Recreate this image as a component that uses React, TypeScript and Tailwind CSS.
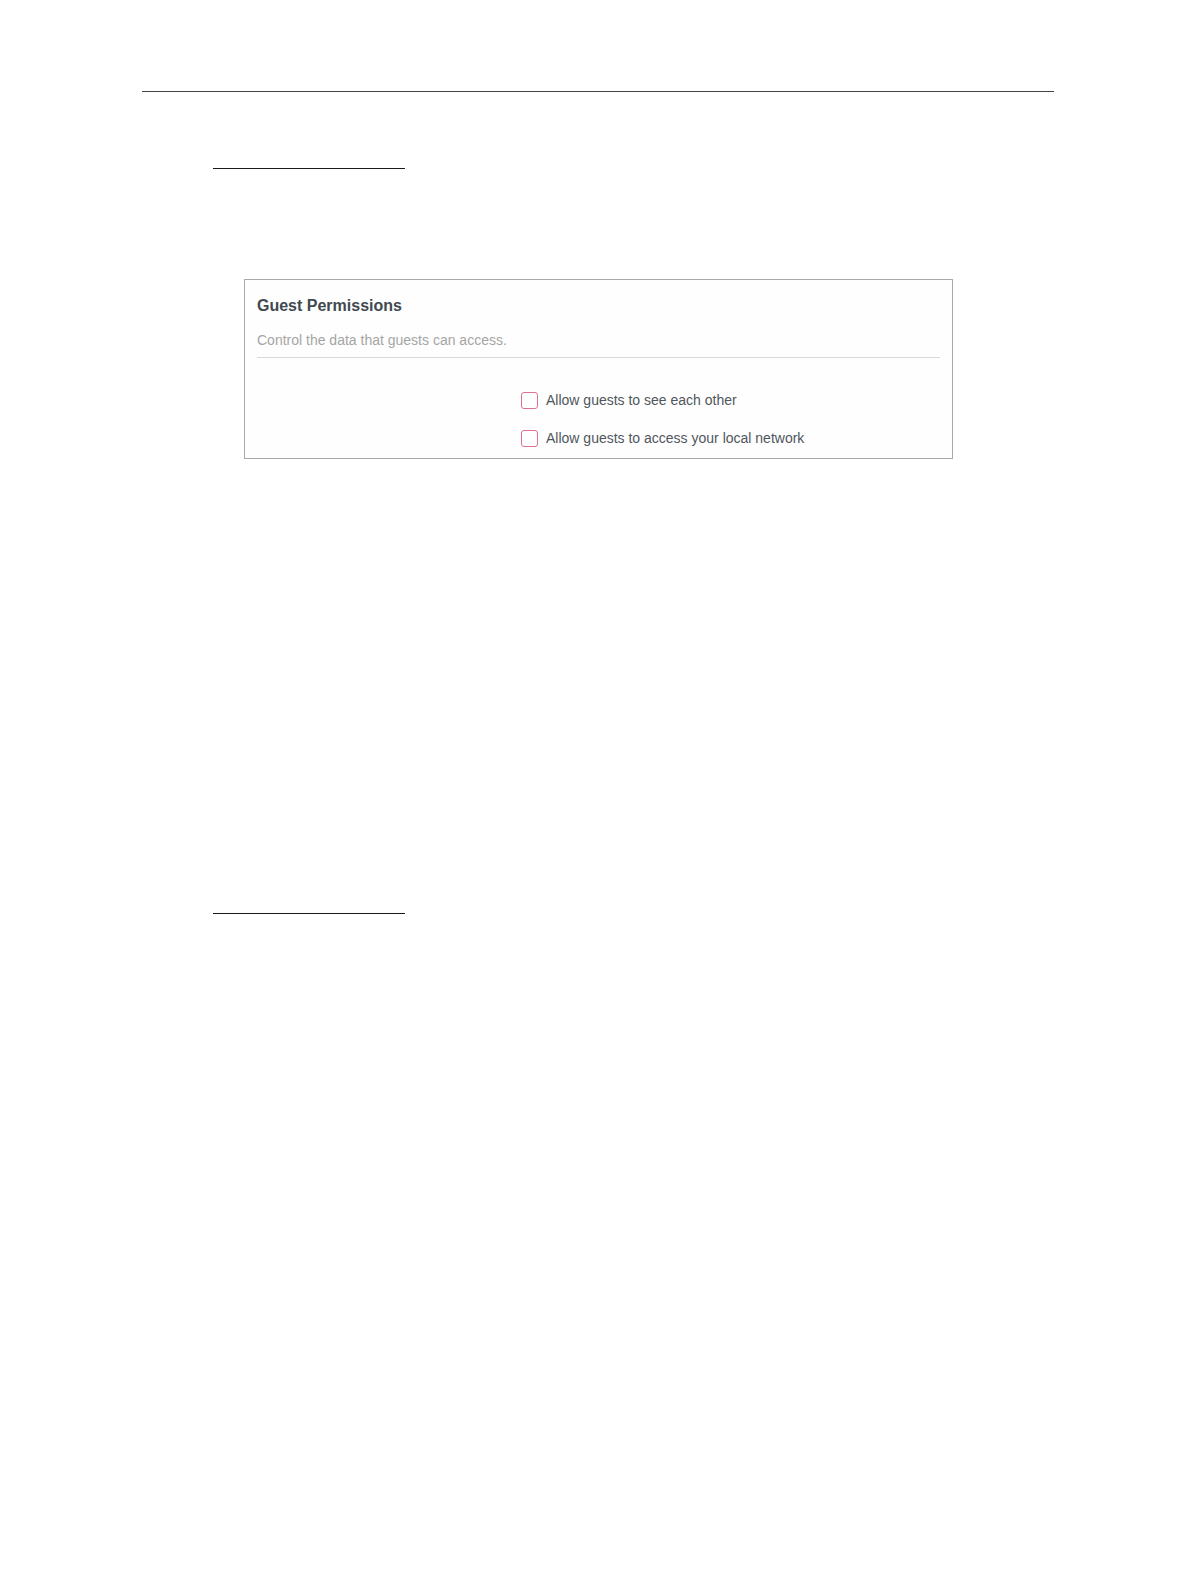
import { useState } from "react";

type Permission = "seeEachOther" | "localNetwork";

const PERMISSIONS: { key: Permission; label: string }[] = [
  { key: "seeEachOther", label: "Allow guests to see each other"           },
  { key: "localNetwork", label: "Allow guests to access your local network" },
];

function GuestPermissions() {
  const [allowed, setAllowed] = useState<Set<Permission>>(new Set());

  function toggle(key: Permission) {
    setAllowed((prev) => {
      const next = new Set(prev);
      if (!next.delete(key)) next.add(key);
      return next;
    });
  }

  return (
    <section className="mr-[101px] ml-[102px] mt-[110px] border border-[#a9a9a9] bg-[#fefefe] px-3 pt-3.5 pb-2.5">
      <h2 className="text-base leading-6 font-bold text-[#414950]">Guest Permissions</h2>
      <p className="mt-3 border-b border-[#d9d9d9] pb-[7px] text-sm leading-5 text-[#a5a5a5]">
        Control the data that guests can access.
      </p>

      <div className="mt-8 flex flex-col gap-[18px] pl-[264px]">
        {PERMISSIONS.map(({ key, label }) => (
          <label key={key} className="flex items-center gap-2 text-sm leading-5 text-[#50565c]">
            <input
              type="checkbox"
              checked={allowed.has(key)}
              onChange={() => toggle(key)}
              className="size-[17px] shrink-0 appearance-none rounded-[3px] border border-[#e0718c] bg-white checked:bg-[#e0718c]"
            />
            {label}
          </label>
        ))}
      </div>
    </section>
  );
}

export default function App() {
  return (
    <main className="min-h-screen bg-white px-[142px] pt-[91px] font-['Liberation_Sans',Arial,sans-serif]">
      <hr className="border-[#434343]" />

      {/* Section rules */}
      <hr className="mt-[76px] ml-[71px] w-48 border-[#1a1a1a]" />
      <GuestPermissions />
      <hr className="mt-[454px] ml-[71px] w-48 border-[#1a1a1a]" />
    </main>
  );
}
